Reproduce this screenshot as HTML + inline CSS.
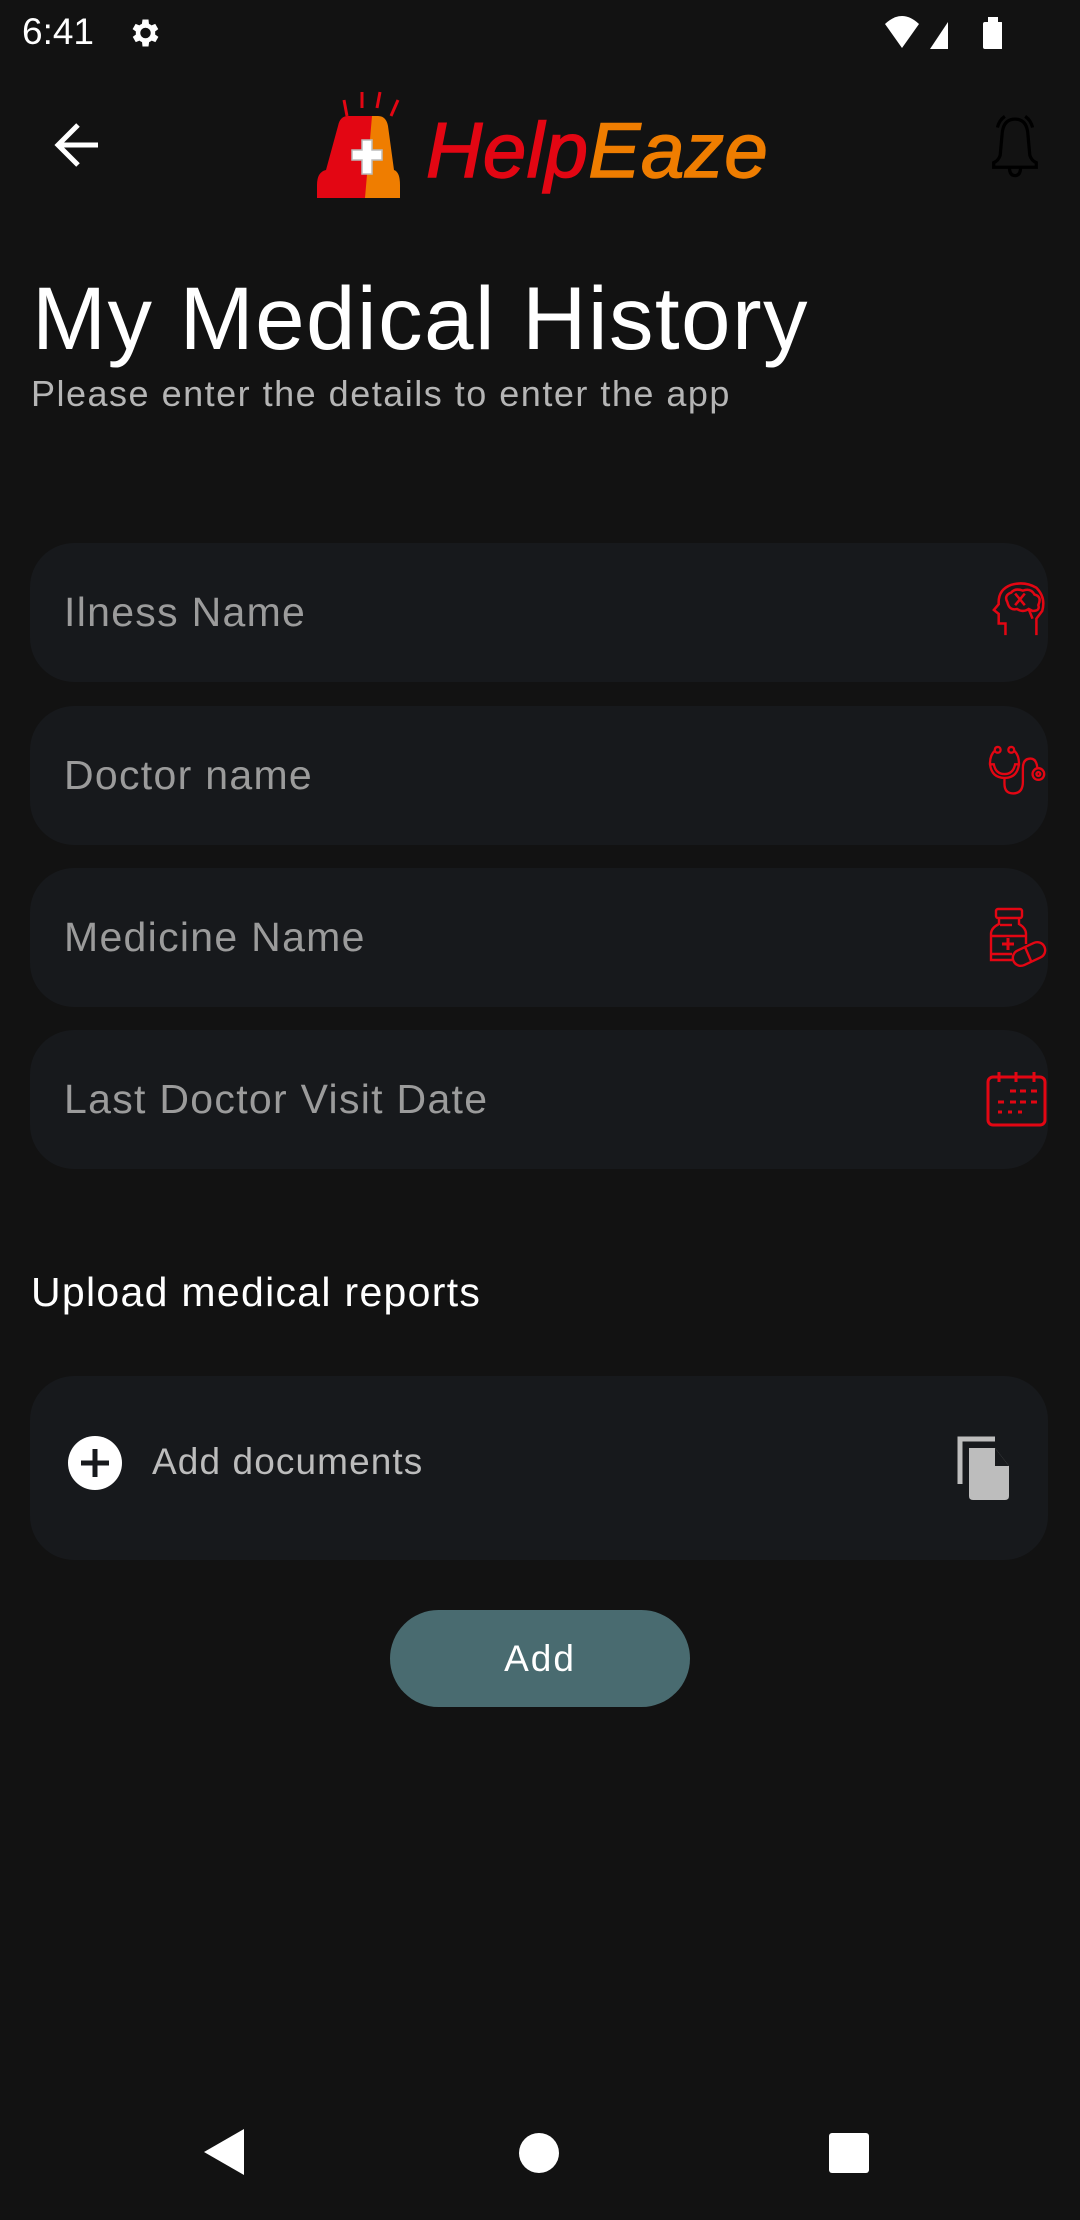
<!DOCTYPE html>
<html><head><meta charset="utf-8">
<style>
*{margin:0;padding:0;box-sizing:border-box}
body{width:1080px;height:2220px;background:#121212;font-family:"Liberation Sans",sans-serif;position:relative;overflow:hidden;color:#fff}
.abs{position:absolute}
.field{position:absolute;left:30px;width:1018px;height:139px;background:#17191c;border-radius:44px}
.ph{position:absolute;left:34px;top:0;line-height:139px;font-size:41px;letter-spacing:1.3px;color:#9b9b9b}
.ic{position:absolute;right:0;top:0}
</style></head><body>
<div class="abs" style="left:22px;top:8px;font-size:37px;line-height:48px;color:#fff">6:41</div>
<svg class="abs" style="left:126px;top:15px" width="36" height="36" viewBox="0 0 24 24"><path fill="#fff" d="M19.4 13a7.5 7.5 0 0 0 0-2l2.1-1.6-2-3.5-2.5 1a7 7 0 0 0-1.7-1L15 3h-4l-.4 2.9a7 7 0 0 0-1.7 1l-2.5-1-2 3.5L6.6 11a7.5 7.5 0 0 0 0 2l-2.1 1.6 2 3.5 2.5-1a7 7 0 0 0 1.7 1L11 21h4l.4-2.9a7 7 0 0 0 1.7-1l2.5 1 2-3.5zM13 15.5A3.5 3.5 0 1 1 13 8.5a3.5 3.5 0 0 1 0 7z"/></svg>
<svg class="abs" style="left:882px;top:14px" width="120" height="38" viewBox="0 0 120 38"><path fill="#fff" d="M3 10 Q20 -6 37 10 L20 34Z"/><path fill="#fff" d="M48 35 L66 8 L66 35Z"/><rect x="101" y="8" width="20" height="27" rx="2" fill="#fff"/><rect x="106" y="3" width="10" height="6" fill="#fff"/></svg>
<svg class="abs" style="left:52px;top:121px" width="50" height="50" viewBox="0 0 50 50"><path d="M46 24H8M26 4 6 24 26 44" stroke="#fff" stroke-width="5" fill="none"/></svg>
<svg class="abs" style="left:314px;top:90px" width="100" height="108" viewBox="0 0 100 108">
<g stroke="#e30613" stroke-width="3"><path d="M30 10 33 26M48 2V18M66 2 63 18M84 10 77 26"/></g>
<path d="M34 26H60L53 108H3V95Q3 82 12 80L24 36Q26 26 34 26Z" fill="#e30613"/>
<path d="M58 26H64Q72 26 74 36L80 80Q86 82 86 95V108H51Z" fill="#ef7d00"/>
<path d="M48 50H58V60H68V70H58V84H48V70H38V60H48Z" fill="#fff" stroke="#bbb" stroke-width="1.5"/>
</svg>
<div class="abs" style="left:426px;top:102px;font-size:78px;letter-spacing:0.5px;font-style:italic;line-height:96px;-webkit-text-stroke:1.5px currentColor"><span style="color:#e30613">Help</span><span style="color:#ef7d00">Eaze</span></div>
<svg class="abs" style="left:990px;top:114px" width="50" height="64" viewBox="0 0 54 68"><g fill="none" stroke="#000" stroke-width="3.5"><path d="M27 5Q14 5 13 22L11 44Q9 50 4 52V57H50V52Q45 50 43 44L41 22Q40 5 27 5Z"/><path d="M21 57Q21 66 27 66 33 66 33 57"/><path d="M8 14Q10 6 16 2M46 14Q44 6 38 2"/></g></svg>
<div class="abs" style="left:32px;top:266px;font-size:89px;letter-spacing:1.4px;line-height:104px;white-space:nowrap">My Medical History</div>
<div class="abs" style="left:31px;top:370px;font-size:36px;letter-spacing:1.5px;line-height:48px;color:#b5b5b5;white-space:nowrap">Please enter the details to enter the app</div>
<div class="field" style="top:543px"><div class="ph">Ilness Name</div>
<svg class="ic" style="right:0;top:36px" width="58" height="60" viewBox="0 0 60 60"><g fill="none" stroke="#e30613" stroke-width="2.6"><path d="M16 57V45H9V35L4 31 9 25Q8 10 22 5Q36 1 48 8Q58 18 54 32L48 40V57"/><path d="M18 23Q14 16 22 13Q26 8 34 11Q42 8 46 15Q54 17 50 26Q52 32 44 32L40 30Q34 34 28 30Q20 32 18 23Z"/><path d="M26 14 36 26M36 14 26 26"/><path d="M40 30 44 40"/></g></svg></div>
<div class="field" style="top:706px"><div class="ph">Doctor name</div>
<svg class="ic" style="right:-2px;top:33px" width="62" height="72" viewBox="0 0 64 62"><g fill="none" stroke="#e30613" stroke-width="2.4"><circle cx="10" cy="5" r="3"/><circle cx="24" cy="5" r="3"/><path d="M7 6Q2 10 2 20Q4 34 17 34Q30 34 32 20Q32 10 27 6"/><path d="M2 20H6Q8 30 17 30Q26 30 28 20H32"/><path d="M17 34V40Q17 50 26 50Q36 50 36 38V24Q36 14 44 14Q50 14 51 24"/><circle cx="52" cy="30" r="6"/><circle cx="52" cy="30" r="2"/></g></svg></div>
<div class="field" style="top:868px"><div class="ph">Medicine Name</div>
<svg class="ic" style="right:0;top:38px" width="60" height="62" viewBox="0 0 60 62"><g fill="none" stroke="#e30613" stroke-width="2.4"><rect x="8" y="3" width="26" height="9" rx="2"/><path d="M11 12V18Q3 22 3 28V54H24"/><path d="M31 12V18Q38 22 38 28V38"/><path d="M3 30H38M3 48H24"/><path d="M20 32V44M14 38H26" stroke-width="3"/><path d="M12 19H24"/><rect x="24" y="40" width="34" height="16" rx="8" transform="rotate(-25 41 48)"/><path d="M37 41 43 55"/></g></svg></div>
<div class="field" style="top:1030px"><div class="ph">Last Doctor Visit Date</div>
<svg class="ic" style="right:0;top:40px" width="62" height="58" viewBox="0 0 62 58"><g fill="none" stroke="#e30613" stroke-width="3"><rect x="2" y="7" width="57" height="48" rx="5"/><path d="M13 2V12M30 2V12M48 2V12"/></g><g stroke="#e30613" stroke-width="3"><path d="M24 21H30M34 21H40M45 21H51M12 32H18M24 32H30M34 32H40M45 32H51M12 42H16M22 42H26M32 42H36"/></g></svg></div>
<div class="abs" style="left:31px;top:1268px;font-size:41px;letter-spacing:1.3px;line-height:48px;white-space:nowrap">Upload medical reports</div>
<div class="field" style="top:1376px;height:184px">
<svg class="abs" style="left:37px;top:59px" width="56" height="56" viewBox="0 0 56 56"><circle cx="28" cy="28" r="27" fill="#fff"/><path d="M28 14V42M14 28H42" stroke="#17191c" stroke-width="5"/></svg>
<div class="abs" style="left:122px;top:61px;font-size:37px;letter-spacing:1.1px;line-height:50px;color:#bcbcbc">Add documents</div>
<svg class="abs" style="left:925px;top:60px" width="58" height="64" viewBox="0 0 58 64"><path d="M5 48V3H40" fill="none" stroke="#bdbdbd" stroke-width="5"/><path d="M14 12H40L54 30V60Q54 64 50 64H18Q14 64 14 60Z" fill="#bdbdbd"/><path d="M40 12 54 30H40Z" fill="#17191c"/></svg>
</div>
<div class="abs" style="left:390px;top:1610px;width:300px;height:97px;border-radius:49px;background:#496b70;text-align:center;line-height:97px;font-size:37px;letter-spacing:2px;color:#fff">Add</div>
<svg class="abs" style="left:200px;top:2127px" width="48" height="50" viewBox="0 0 48 50"><path d="M44 2V48L4 25Z" fill="#fff"/></svg>
<div class="abs" style="left:519px;top:2133px;width:40px;height:40px;border-radius:50%;background:#fff"></div>
<div class="abs" style="left:829px;top:2133px;width:40px;height:40px;border-radius:3px;background:#fff"></div>
</body></html>
